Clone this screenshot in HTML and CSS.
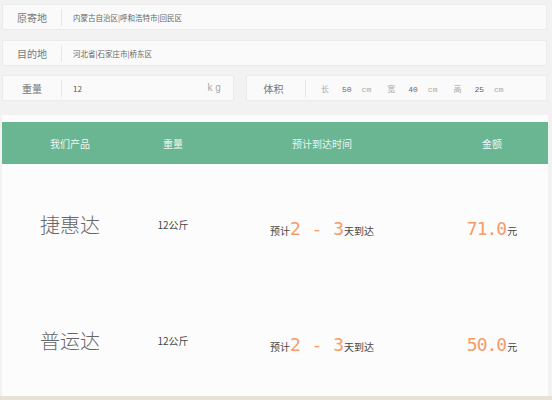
FILE: index.html
```html
<!DOCTYPE html>
<html lang="zh">
<head>
<meta charset="utf-8">
<title>运费查询</title>
<link rel="stylesheet" href="styles.css">
</head>
<body>
<div class="page">
  <div class="field">
    <div class="label">原寄地</div>
    <div class="value">内蒙古自治区|呼和浩特市|回民区</div>
  </div>
  <div class="field">
    <div class="label">目的地</div>
    <div class="value">河北省|石家庄市|桥东区</div>
  </div>
  <div class="field-row">
    <div class="field weight">
      <div class="label">重量</div>
      <div class="value num">12</div>
      <span class="unit">kg</span>
    </div>
    <div class="field volume">
      <div class="label">体积</div>
      <div class="dims">
        <span class="dl">长</span><span class="dn">50</span><span class="du">cm</span>
        <span class="dl">宽</span><span class="dn">40</span><span class="du">cm</span>
        <span class="dl">高</span><span class="dn">25</span><span class="du">cm</span>
      </div>
    </div>
  </div>
  <div class="card">
    <div class="thead">
      <div class="cell">我们产品</div>
      <div class="cell">重量</div>
      <div class="cell">预计到达时间</div>
      <div class="cell">金额</div>
    </div>
    <div class="trow">
      <div class="cell product">捷惠达</div>
      <div class="cell kg">12公斤</div>
      <div class="cell time"><span class="small">预计</span><span class="big">2 - 3</span><span class="small">天到达</span></div>
      <div class="cell amount"><span class="big money">71.0</span><span class="small">元</span></div>
    </div>
    <div class="trow">
      <div class="cell product">普运达</div>
      <div class="cell kg">12公斤</div>
      <div class="cell time"><span class="small">预计</span><span class="big">2 - 3</span><span class="small">天到达</span></div>
      <div class="cell amount"><span class="big money">50.0</span><span class="small">元</span></div>
    </div>
  </div>
</div>
<div class="footer"></div>
</body>
</html>
```
FILE: styles.css
```css
* { box-sizing: border-box; }
html, body { margin: 0; padding: 0; }
body {
  background: #f2f2f2;
  font-family: "Noto Sans CJK SC", "Noto Sans", sans-serif;
  color: #555;
  width: 552px;
  height: 400px;
  overflow: hidden;
}
.page {
  padding: 4px 0 0 2px;
  width: 547px;
}
.field {
  display: flex;
  align-items: center;
  height: 26px;
  background: #fafafa;
  border: 1px solid #ebebeb;
  margin-bottom: 10px;
}
.field-row {
  display: flex;
  gap: 12px;
  margin-top: -1px;
}
.field-row .field { margin-bottom: 0; }
.weight { width: 232px; }
.volume { flex: 1; }
.label {
  width: 59px;
  height: 17px;
  line-height: 17px;
  border-right: 1px solid #e6e6e6;
  text-align: center;
  font-size: 10px;
  color: #777;
  flex: none;
}
.volume .label { padding-right: 5px; }
.value {
  padding-left: 11px;
  font-size: 7.5px;
  color: #666;
  white-space: nowrap;
}
.value.num { font-size: 8px; color: #555; }
.unit {
  margin-left: auto;
  padding-right: 10px;
  font-family: "Liberation Mono", monospace;
  font-size: 10px;
  letter-spacing: 2px;
  color: #aaa;
}
.dims {
  display: flex;
  align-items: baseline;
  padding-left: 15px;
  font-size: 8px;
  white-space: nowrap;
}
.dl { color: #aaa; margin-right: 13px; }
.dn { font-family: "Liberation Mono", monospace; color: #666; margin-right: 10px; }
.du { font-family: "Liberation Mono", monospace; color: #aaa; margin-right: 16px; }

.card {
  margin-top: 14px;
  padding-top: 7px;
  background: #fcfcfc;
  width: 546px;
}
.thead, .trow {
  display: grid;
  grid-template-columns: 136px 70px 228px 1fr;
}
.thead {
  height: 42px;
  background: #6bb692;
  color: rgba(255,255,255,0.9);
  font-size: 10px;
}
.cell {
  display: flex;
  align-items: center;
  justify-content: center;
  white-space: nowrap;
}
.trow { height: 116px; padding-top: 4px; }
.product {
  font-size: 20px;
  font-weight: 300;
  color: #666;
}
.kg { font-size: 10px; color: #444; }
.time, .amount { align-items: baseline; padding-top: 50px; }
.small { font-size: 10px; color: #444; }
.big {
  font-family: "DejaVu Sans Mono", "Liberation Mono", monospace;
  font-size: 18px;
  color: #f79a68;
  white-space: pre;
}
.money { letter-spacing: -1px; margin-right: 1px; }
.footer {
  height: 4px;
  background: #e7e2d8;
}
```
